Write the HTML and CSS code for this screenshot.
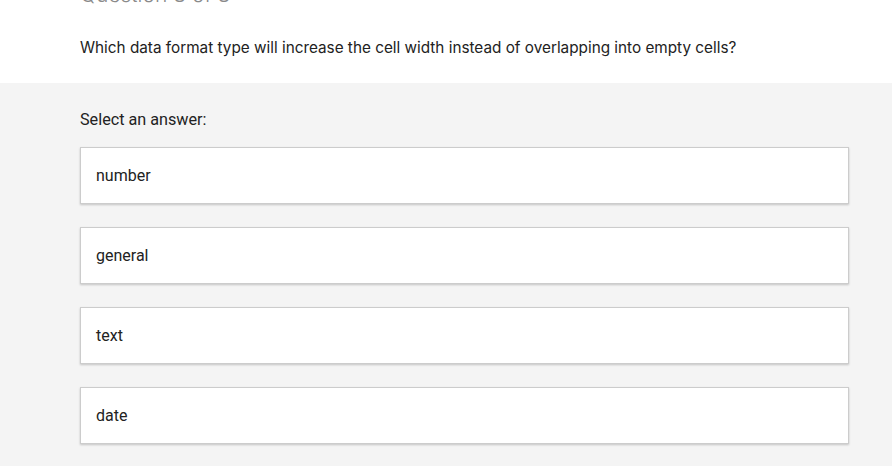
FILE: index.html
```html
<!DOCTYPE html>
<html>
<head>
<meta charset="utf-8">
<link rel="stylesheet" href="styles.css">
</head>
<body>
<div class="page">
  <header class="head">
    <div class="counter">Question 8 of 8</div>
    <p class="question">Which data format type will increase the cell width instead of overlapping into empty cells?</p>
  </header>
  <main class="answers">
    <p class="prompt">Select an answer:</p>
    <ul class="options">
      <li class="option">number</li>
      <li class="option">general</li>
      <li class="option">text</li>
      <li class="option">date</li>
    </ul>
  </main>
</div>
</body>
</html>
```
FILE: styles.css
```css
html, body {
  margin: 0;
  padding: 0;
  background: #f4f4f4;
  height: 100%;
  overflow: hidden;
}
.page {
  min-height: 466px;
}
.head {
  background: #ffffff;
  height: 83px;
  padding: 0 80px;
  box-sizing: border-box;
  overflow: hidden;
}
.counter {
  font-family: Inter, "Noto Sans", sans-serif;
  font-weight: 300;
  font-size: 21px;
  line-height: 24px;
  color: #8a8a8a;
  margin-top: -17px;
}
.question {
  margin: 31px 0 0;
  font-family: Inter, "Noto Sans", sans-serif;
  font-size: 15.3px;
  line-height: 20px;
  color: #222222;
}
.answers {
  padding: 27px 43px 0 80px;
}
.prompt {
  margin: 0;
  font-family: Roboto, "Liberation Sans", sans-serif;
  font-size: 16.2px;
  line-height: 20px;
  color: #222222;
}
.options {
  list-style: none;
  margin: 17px 0 0;
  padding: 0;
  display: flex;
  flex-direction: column;
  gap: 24px;
}
.option {
  height: 57px;
  box-sizing: border-box;
  background: #ffffff;
  border: 1px solid #cccccc;
  box-shadow: 0 1px 2px rgba(0,0,0,0.2);
  padding: 0 15px;
  display: flex;
  align-items: center;
  font-family: Roboto, "Liberation Sans", sans-serif;
  font-size: 16px;
  color: #222222;
}
.options {
  gap: 23px;
}
```
